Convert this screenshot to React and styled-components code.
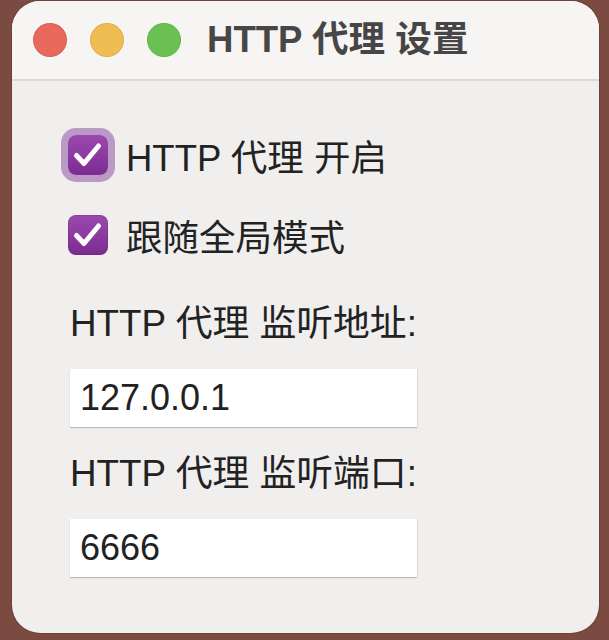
import React from "react";
import styled, { createGlobalStyle } from "styled-components";

const FONT = `"Liberation Sans", "Noto Sans CJK SC", sans-serif`;

const Global = createGlobalStyle`
  html, body { margin: 0; padding: 0; }
  body {
    background: #7b4a41;
    font-family: ${FONT};
    width: 609px;
    height: 640px;
    overflow: hidden;
  }
`;

const Desktop = styled.div`
  padding: 1px 10px 0 12px;
  height: 640px;
  box-sizing: border-box;
`;

const Window = styled.div`
  width: 587px;
  height: 632px;
  border-radius: 28px;
  background: #f0efee;
  overflow: hidden;
  display: flex;
  flex-direction: column;
  box-shadow: 0 0 0 1px rgba(0, 0, 0, 0.12);
`;

const TitleBar = styled.div`
  height: 78px;
  flex: none;
  display: flex;
  align-items: center;
  padding-left: 21px;
  background: #f6f5f4;
  border-bottom: 2px solid #dcdad8;
`;

const Lights = styled.div`
  display: flex;
  gap: 23px;
`;

const Light = styled.span`
  width: 34px;
  height: 34px;
  border-radius: 50%;
  background: ${(p) => p.$color};
  box-shadow: inset 0 0 0 1px rgba(0, 0, 0, 0.08);
`;

const Title = styled.h1`
  margin: 0 0 0 26px;
  font-size: 36.6px;
  font-weight: 700;
  color: #464646;
  line-height: 40px;
`;

const Content = styled.div`
  padding: 54px 0 0 56px;
  display: flex;
  flex-direction: column;
`;

const CheckRow = styled.label`
  display: flex;
  align-items: center;
  height: 40px;
  gap: 18px;
  margin-bottom: ${(p) => p.$mb || 0}px;
  font-size: 36.5px;
  color: #222;
`;

const Box = styled.span`
  width: 40px;
  height: 40px;
  border-radius: 8px;
  background: linear-gradient(#9b49ae, #7c2c91);
  display: flex;
  align-items: center;
  justify-content: center;
  box-shadow: ${(p) =>
    p.$focus ? "0 0 0 7px rgba(150, 95, 170, 0.6)" : "inset 0 0 0 1px rgba(0,0,0,0.1)"};
`;

const Field = styled.div`
  display: flex;
  flex-direction: column;
  padding-left: 2px;
`;

const Label = styled.div`
  font-size: 36.8px;
  line-height: 40px;
  color: #222;
  margin-bottom: 25px;
`;

const Input = styled.input`
  width: 347px;
  height: 58px;
  box-sizing: border-box;
  border: none;
  outline: none;
  background: #fff;
  padding: 0 0 0 10px;
  font-family: ${FONT};
  font-size: 36px;
  color: #222;
  box-shadow: 0 1px 1px rgba(0, 0, 0, 0.22), 1px 0 0 rgba(0, 0, 0, 0.06);
  margin-bottom: 27px;
`;

const Check = () => (
  <svg width="40" height="40" viewBox="0 0 40 40">
    <path
      d="M8.5 20.5 L16 28.5 L30.5 11"
      fill="none"
      stroke="#fff"
      strokeWidth="5"
      strokeLinecap="round"
      strokeLinejoin="round"
    />
  </svg>
);

export default function App() {
  return (
    <>
      <Global />
      <Desktop>
        <Window>
          <TitleBar>
            <Lights>
              <Light $color="#e8685c" />
              <Light $color="#efbd51" />
              <Light $color="#6ac152" />
            </Lights>
            <Title>HTTP 代理 设置</Title>
          </TitleBar>
          <Content>
            <CheckRow $mb={40}>
              <Box $focus>
                <Check />
              </Box>
              HTTP 代理 开启
            </CheckRow>
            <CheckRow $mb={49}>
              <Box>
                <Check />
              </Box>
              跟随全局模式
            </CheckRow>
            <Field>
              <Label>HTTP 代理 监听地址:</Label>
              <Input defaultValue="127.0.0.1" />
            </Field>
            <Field>
              <Label>HTTP 代理 监听端口:</Label>
              <Input defaultValue="6666" />
            </Field>
          </Content>
        </Window>
      </Desktop>
    </>
  );
}
